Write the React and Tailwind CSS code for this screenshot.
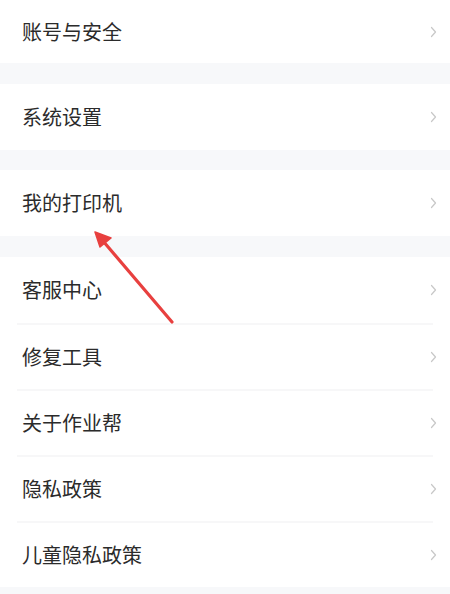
const GROUPS = [
  ['账号与安全'],
  ['系统设置'],
  ['我的打印机'],
  ['客服中心', '修复工具', '关于作业帮', '隐私政策', '儿童隐私政策'],
]

function Chevron() {
  return (
    <svg className="w-[7px] h-[12px]" viewBox="0 0 7 12" fill="none">
      <path d="M1.5 1.5L5.5 6L1.5 10.5" stroke="#c8c8c8" strokeWidth="1.2" strokeLinecap="round" strokeLinejoin="round" />
    </svg>
  )
}

function Row({ label, first, divider }) {
  return (
    <div className="bg-white">
      {divider && <div className="mx-[17px] h-[2px] bg-[#f7f7f8]" />}
      <div className={`flex items-center justify-between pl-[22px] pr-[13px] ${first ? 'h-[63px]' : divider ? 'h-[64px]' : 'h-[66px]'}`}>
        <span className="text-[20px] leading-none text-[#2b2b2b] font-['Noto_Sans_CJK_SC',sans-serif]">{label}</span>
        <Chevron />
      </div>
    </div>
  )
}

export default function App() {
  return (
    <div className="relative w-[450px] h-[594px] overflow-hidden bg-[#f7f8fa]">
      <div className="flex flex-col">
        {GROUPS.map((items, gi) => (
          <div key={gi} className={gi === 0 ? '' : gi === 2 ? 'mt-[20px]' : 'mt-[21px]'}>
            {items.map((label, i) => (
              <Row key={label} label={label} first={gi === 0} divider={i > 0} />
            ))}
          </div>
        ))}
      </div>

      {/* annotation arrow */}
      <svg className="absolute left-0 top-0 w-[450px] h-[594px] pointer-events-none" viewBox="0 0 450 594">
        <line x1="172" y1="322" x2="103" y2="241" stroke="#e8403f" strokeWidth="3.2" strokeLinecap="round" />
        <path d="M95 232 L111 238 L100 247 Z" fill="#e8403f" stroke="#e8403f" strokeWidth="1.5" strokeLinejoin="round" />
      </svg>
    </div>
  )
}
